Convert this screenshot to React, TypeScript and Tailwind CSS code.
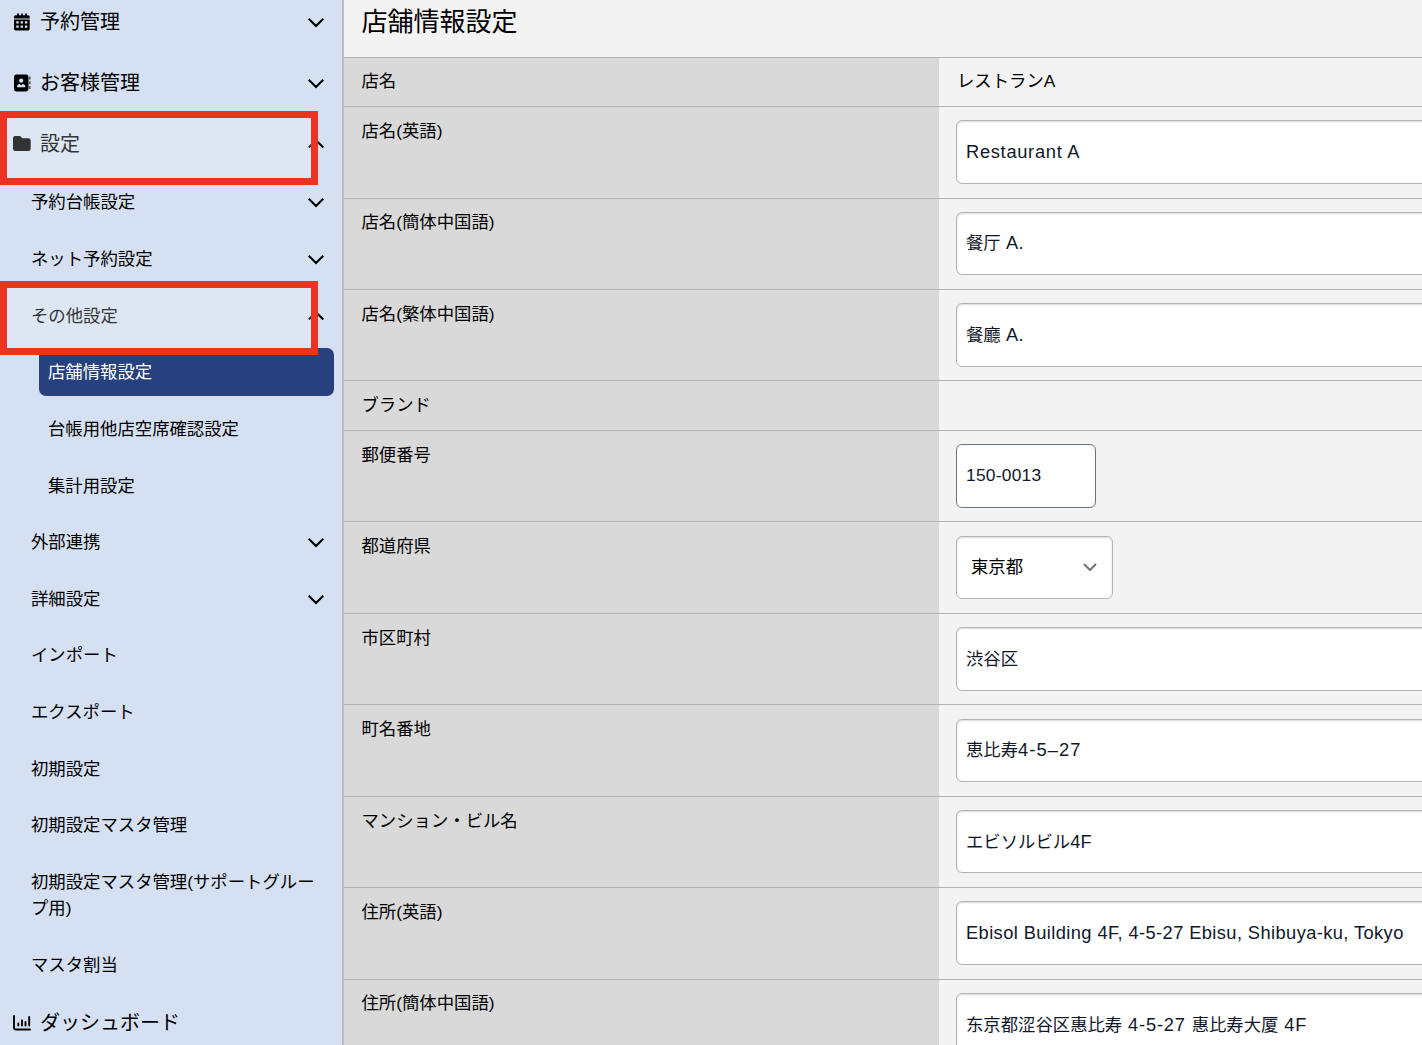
const calendar = (
  <svg viewBox="0 0 18 18" className="w-[18px] h-[18px]" fill="currentColor">
    <path d="M4.100 0.500h1.800v1.700h2.300v-1.700h1.600v1.700h2.300v-1.700h1.800v1.700h1.200q1.600 0 1.600 1.500v1.700h-15.700v-1.700q0-1.500 1.600-1.500h1.500z" />
    <path fillRule="evenodd" d="M1 6.400h15.700v9.400q0 1.600-1.600 1.600h-12.500q-1.600 0-1.600-1.600zM3.300 8.300v2.200h2.400v-2.200zM7.600 8.300v2.200h2.400v-2.200zM11.900 8.300v2.200h2.400v-2.200zM3.300 12.500v2.200h2.400v-2.200zM7.600 12.500v2.200h2.400v-2.200zM11.900 12.500v2.200h2.400v-2.200z" />
  </svg>
);

const contacts = (
  <svg viewBox="0 0 18 18" className="w-[18px] h-[18px]" fill="currentColor">
    <rect x="1" y="0.5" width="14.5" height="17" rx="2.4" />
    <rect x="16.2" y="2.5" width="1.3" height="3" opacity="0.7" />
    <rect x="16.2" y="7.2" width="1.3" height="3" opacity="0.7" />
    <rect x="16.2" y="12" width="1.3" height="3" opacity="0.7" />
    <circle cx="8.2" cy="6.7" r="2.1" fill="#d5e1f2" />
    <path d="M4 13.300c0-2.400 1.300-3.300 2.900-3.300l1.300 1.400 1.300-1.400c1.600 0 2.900 0.900 2.900 3.300z" fill="#d5e1f2" />
  </svg>
);

const folder = (
  <svg viewBox="0 0 18 18" className="w-[18px] h-[18px]" fill="currentColor">
    <path d="M2.200 1h4.300q0.800 0 1.300 0.600l1.300 1.300q0.300 0.300 0.800 0.300h5.600q2.200 0 2.200 2.200v8.400q0 2.200-2.200 2.200H2.200Q0 16 0 13.800V3.200Q0 1 2.200 1z" />
  </svg>
);

const chart = (
  <svg viewBox="0 0 18 18" className="w-[18px] h-[18px]" fill="none" stroke="currentColor" strokeWidth="1.900" strokeLinecap="round">
    <path d="M1 2v11.500q0 2 2 2h14" />
    <path d="M5.300 9.500v2M9 6.500v5M12.500 8v3.500M16.200 3v8.500" />
  </svg>
);

type Item = { label: string; open?: boolean; arrow?: boolean; nested?: boolean; active?: boolean; marked?: boolean };

const subItems: Item[] = [
  { label: '予約台帳設定', arrow: true },
  { label: 'ネット予約設定', arrow: true },
  { label: 'その他設定', arrow: true, open: true, marked: true },
  { label: '店舗情報設定', nested: true, active: true },
  { label: '台帳用他店空席確認設定', nested: true },
  { label: '集計用設定', nested: true },
  { label: '外部連携', arrow: true },
  { label: '詳細設定', arrow: true },
  { label: 'インポート' },
  { label: 'エクスポート' },
  { label: '初期設定' },
  { label: '初期設定マスタ管理' },
  { label: '初期設定マスタ管理(サポートグループ用)' },
  { label: 'マスタ割当' },
];

type Row = { label: string; value: string; kind: 'text' | 'input' | 'short' | 'select'; latin?: string };

const rows: Row[] = [
  { label: '店名', value: 'レストランA', kind: 'text' },
  { label: '店名(英語)', value: 'Restaurant A', kind: 'input', latin: 'text-[18.3px] tracking-[0.7px]' },
  { label: '店名(簡体中国語)', value: '餐厅 A.', kind: 'input', latin: 'text-[18.3px] tracking-[0.3px]' },
  { label: '店名(繁体中国語)', value: '餐廳 A.', kind: 'input', latin: 'text-[18.3px] tracking-[0.3px]' },
  { label: 'ブランド', value: '', kind: 'text' },
  { label: '郵便番号', value: '150-0013', kind: 'short', latin: 'tracking-[0.25px]' },
  { label: '都道府県', value: '東京都', kind: 'select' },
  { label: '市区町村', value: '渋谷区', kind: 'input' },
  { label: '町名番地', value: '恵比寿4-5–27', kind: 'input', latin: 'text-[18.3px] tracking-[1.1px]' },
  { label: 'マンション・ビル名', value: 'エビソルビル4F', kind: 'input', latin: 'text-[18.3px] tracking-[0.3px]' },
  { label: '住所(英語)', value: 'Ebisol Building 4F, 4-5-27 Ebisu, Shibuya-ku, Tokyo', kind: 'input', latin: 'text-[18.3px] tracking-[0.4px]' },
  { label: '住所(簡体中国語)', value: '东京都涩谷区惠比寿 4-5-27 惠比寿大厦 4F', kind: 'input', latin: 'text-[18.3px] tracking-[0.8px]' },
];

function Chevron({ open }: { open?: boolean }) {
  return (
    <svg viewBox="0 0 16 16" className="w-4 h-4 shrink-0" fill="none" stroke="currentColor" strokeWidth="2.1">
      <path d={open ? 'M0.700 11.500L8 4.200l7.300 7.300' : 'M0.700 4.700L8 12l7.300-7.300'} />
    </svg>
  );
}

function MainItem({ icon, label, arrow, open, marked }: Item & { icon: React.ReactNode }) {
  return (
    <div className="relative flex items-center h-[61px] pl-[13px] pr-[18px] text-[20px]">
      <span className="flex w-[18px] mr-[9px]">{icon}</span>
      <span className="flex-1">{label}</span>
      {arrow && <Chevron open={open} />}
      {marked && <div className="absolute z-10 left-0 top-[-2.5px] w-[318px] h-[74px] border-[7px] border-[#eb3323] bg-white/20" />}
    </div>
  );
}

function SubItem({ label, arrow, open, nested, active, marked }: Item) {
  if (nested) {
    return (
      <div className="h-[56.65px] pl-[39px] pr-[8px] py-[4.5px]">
        <div className={active ? 'flex items-center h-full pl-[9px] rounded-[7px] bg-[#26417e] text-white' : 'flex items-center h-full pl-[9px]'}>
          {label}
        </div>
      </div>
    );
  }
  return (
    <div className="relative flex items-center min-h-[56.65px] py-[15.3px] pl-[31px] pr-[18px]">
      <span className="flex-1 break-all">{label}</span>
      {arrow && <Chevron open={open} />}
      {marked && <div className="absolute z-10 left-0 top-[-6px] w-[318px] h-[74px] border-[7px] border-[#eb3323] bg-white/20" />}
    </div>
  );
}

// Latin runs are set slightly larger than the kanji around them
function Value({ row }: { row: Row }) {
  const parts = row.value.split(/([ -~–]+)/).filter(Boolean);
  return (
    <span className="whitespace-pre">
      {parts.map((part, i) => (
        <span key={i} className={/^[ -~–]+$/.test(part) ? row.latin : undefined}>{part}</span>
      ))}
    </span>
  );
}

function Field({ row }: { row: Row }) {
  const box = 'flex items-center h-[63.5px] rounded-[6px] border bg-white text-[#0f172a]';
  if (row.kind === 'short') {
    return <div className={`${box} w-[140px] pl-[9px] pb-[2px] border-[#6b7280]`}><Value row={row} /></div>;
  }
  if (row.kind === 'select') {
    return (
      <div className={`${box} w-[157px] pl-[14px] pr-[15px] justify-between border-[#b3b3b3] shadow-[inset_0_1px_2px_rgba(0,0,0,0.15)]`}>
        <span className="text-black">{row.value}</span>
        <svg viewBox="0 0 14 14" className="w-[14px] h-[14px]" fill="none" stroke="#6b7280" strokeWidth="2" strokeLinecap="round" strokeLinejoin="round">
          <path d="M1.500 4.500L7 10l5.500-5.500" />
        </svg>
      </div>
    );
  }
  return (
    <div className={`${box} w-[600px] pl-[9px] border-[#b3b3b3] shadow-[inset_0_1px_2px_rgba(0,0,0,0.15)]`}>
      <Value row={row} />
    </div>
  );
}

export default function App() {
  return (
    <div lang="ja" className="flex w-[1422px] h-[1045px] overflow-hidden bg-[#f3f3f3] text-black text-[17.36px] leading-[26px] font-['Liberation_Sans','Noto_Sans_CJK_JP',sans-serif]">
      <aside className="w-[344px] shrink-0 border-r-2 border-[#b9bcc0] bg-[#d5e1f2]">
        <nav className="-mt-[9px]">
          <MainItem icon={calendar} label="予約管理" arrow />
          <MainItem icon={contacts} label="お客様管理" arrow />
          <MainItem icon={folder} label="設定" arrow open marked />
          {subItems.map((item) => (
            <SubItem key={item.label} {...item} />
          ))}
          <MainItem icon={chart} label="ダッシュボード" />
        </nav>
      </aside>

      <main className="flex-1 min-w-0 overflow-hidden">
        <h1 className="h-[56.500px] pl-[17.500px] pt-[4px] text-[26px] leading-[36px]">店舗情報設定</h1>
        {rows.map((row) => (
          <div key={row.label} className={row.kind === 'text' ? 'flex h-[49.6px] border-t border-[#b3b3b3]' : 'flex h-[91.45px] border-t border-[#b3b3b3]'}>
            <div className="w-[595px] shrink-0 pl-[17.500px] pt-[10.800px] bg-[#d9d9d9]">{row.label}</div>
            <div className={row.kind === 'text' ? 'pl-[18px] pt-[10.800px]' : 'pl-[17px] pt-[13.200px]'}>
              {row.kind === 'text' ? row.value : <Field row={row} />}
            </div>
          </div>
        ))}
      </main>
    </div>
  );
}
